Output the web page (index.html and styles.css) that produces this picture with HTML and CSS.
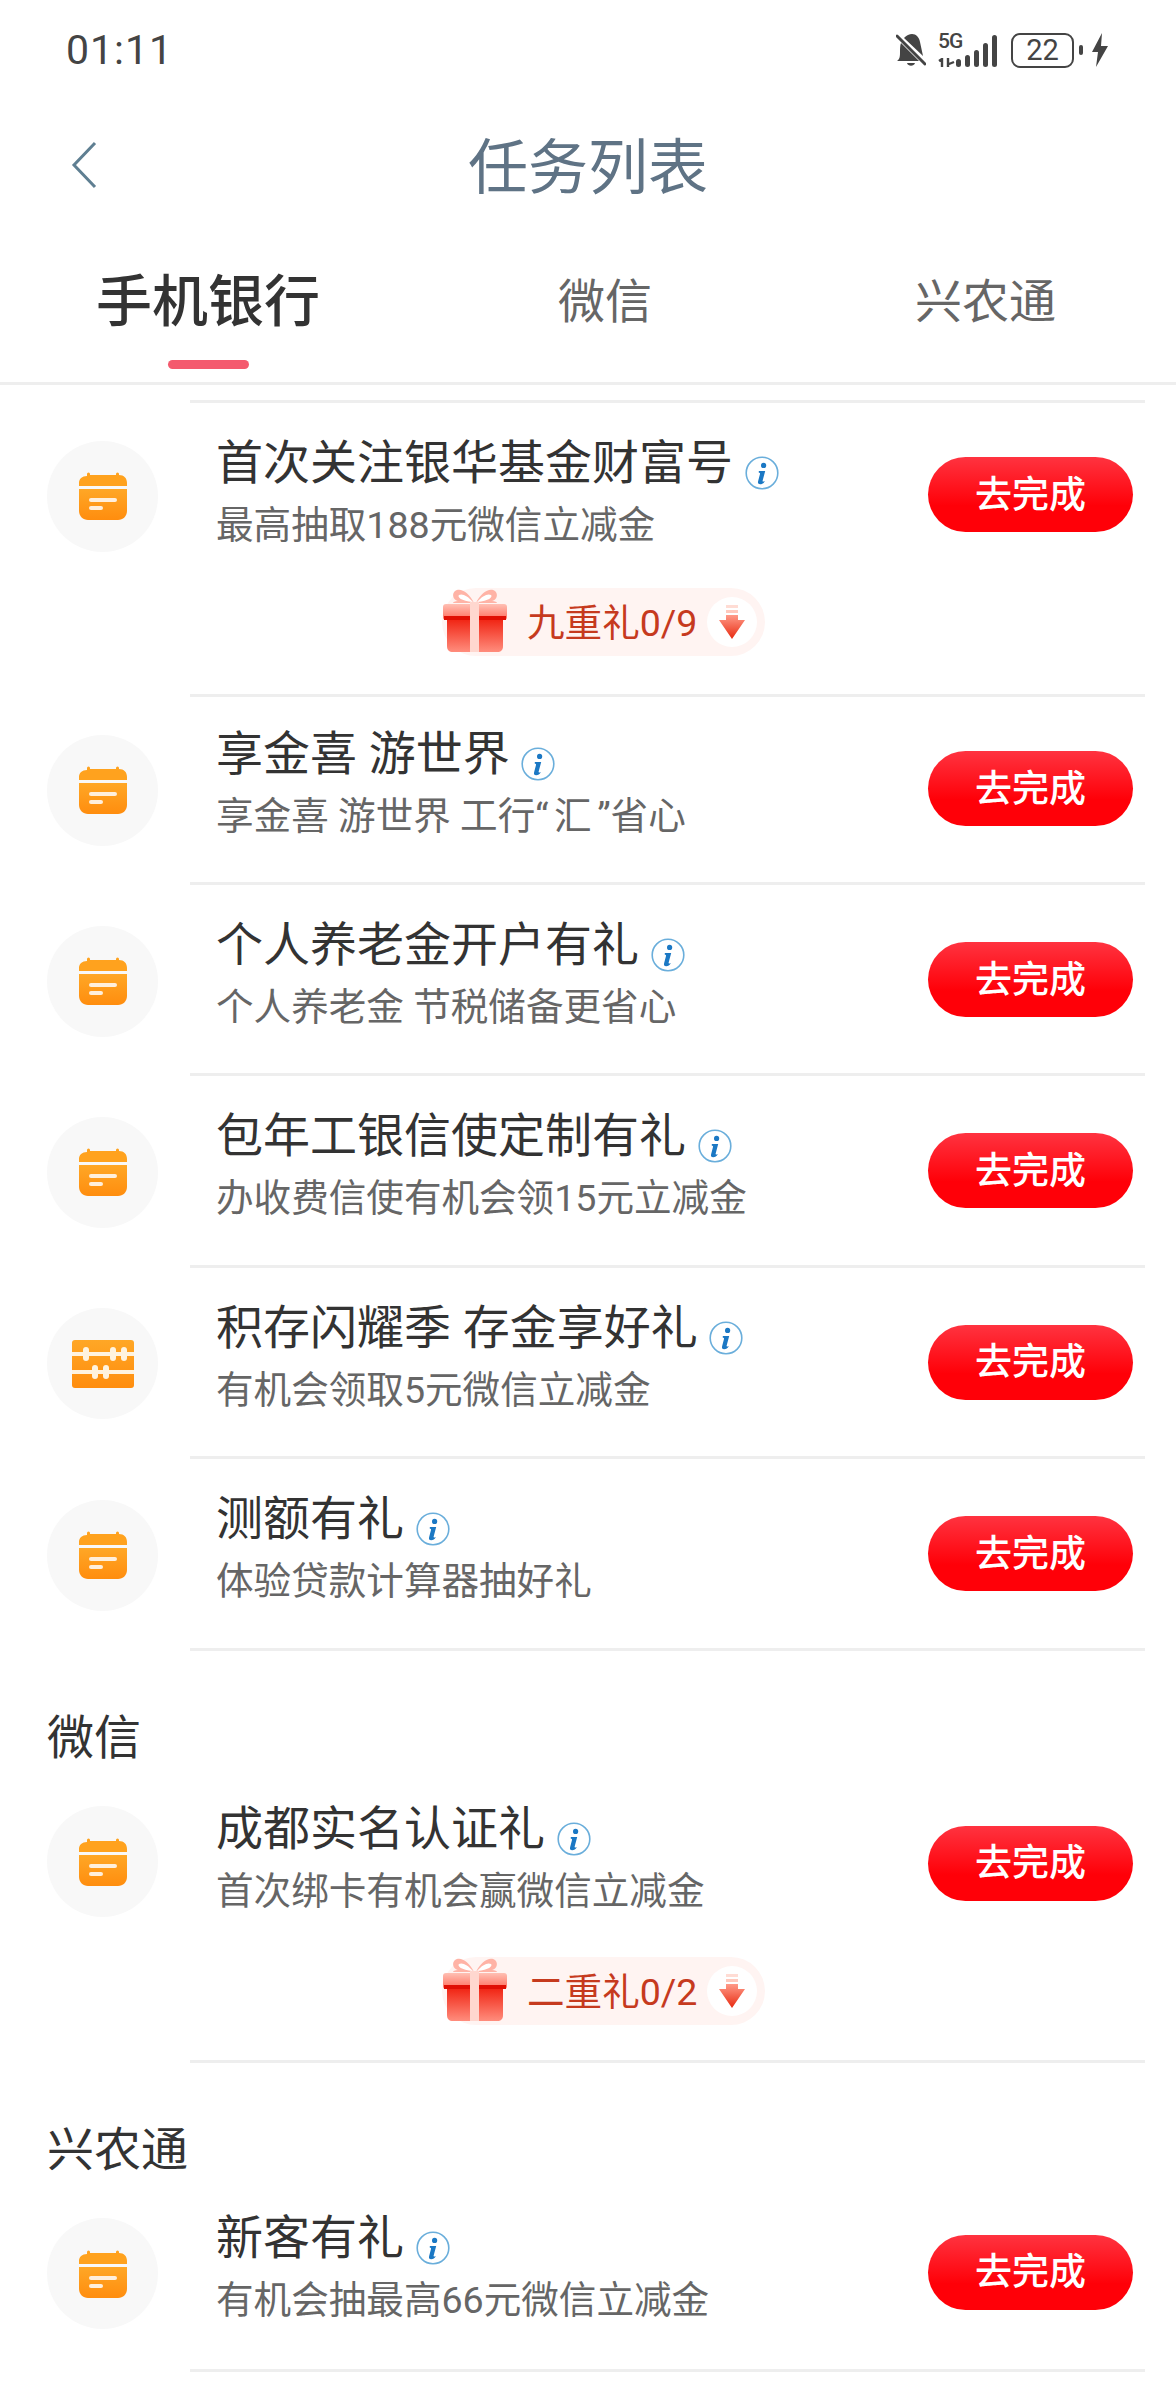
FILE: index.html
```html
<!DOCTYPE html>
<html lang="zh">
<head>
  <meta charset="utf-8">
  <title>任务列表</title>
  <link rel="stylesheet" href="styles.css">
</head>
<body>

<svg class="sprite" width="0" height="0">
  <defs>
    <linearGradient id="orange" x1="0" y1="0" x2="0" y2="1">
      <stop offset="0" stop-color="#ffa726"/>
      <stop offset="1" stop-color="#ff8d0e"/>
    </linearGradient>
    <linearGradient id="giftBody" x1="0" y1="0" x2="0" y2="1">
      <stop offset="0" stop-color="#f0200f"/>
      <stop offset="1" stop-color="#ff8d7d"/>
    </linearGradient>
    <linearGradient id="giftLid" x1="0" y1="0" x2="0" y2="1">
      <stop offset="0" stop-color="#ffc0b4"/>
      <stop offset="1" stop-color="#ff6d5c"/>
    </linearGradient>
    <linearGradient id="arrowFill" x1="0" y1="0" x2="0" y2="1">
      <stop offset="0" stop-color="#ff9a88"/>
      <stop offset="1" stop-color="#e82a10"/>
    </linearGradient>
    <symbol id="calendar" viewBox="0 0 50 50">
      <path d="M9 5V3a1.5 1.5 0 0 1 3 0V4h26V3a1.5 1.5 0 0 1 3 0V4c5 0 8 3 8 8v3H1v-3c0-4 3-7 8-7z" fill="#ffa21e"/>
      <path d="M1 18h48v22c0 5-4 9-9 9H10c-5 0-9-4-9-9z" fill="url(#orange)"/>
      <rect x="11" y="27" width="28" height="4" rx="2" fill="#ffefdc"/>
      <rect x="11" y="35" width="14" height="4" rx="2" fill="#ffefdc"/>
    </symbol>
    <symbol id="abacus" viewBox="0 0 62 50">
      <rect x="0" y="1" width="62" height="48" rx="3" fill="url(#orange)"/>
      <rect x="0" y="13" width="62" height="4" fill="#fff3df"/>
      <rect x="0" y="31" width="62" height="4" fill="#fff3df"/>
      <rect x="11" y="8" width="6" height="14" rx="3" fill="#fff3df"/>
      <rect x="38" y="8" width="6" height="14" rx="3" fill="#fff3df"/>
      <rect x="49" y="8" width="6" height="14" rx="3" fill="#fff3df"/>
      <rect x="20" y="26" width="6" height="14" rx="3" fill="#fff3df"/>
      <rect x="31" y="26" width="6" height="14" rx="3" fill="#fff3df"/>
    </symbol>
    <symbol id="info" viewBox="0 0 34 34">
      <circle cx="17" cy="17" r="15.8" fill="#fff" stroke="#6aaedb" stroke-width="1.6"/>
      <circle cx="18.6" cy="9.4" r="2.6" fill="#1b78c4"/>
      <path d="M13.800 15h6.400l-2.600 9.800c-.2.9.6 1.100 2.300.2-1.100 2.400-2.900 3.200-4.700 3.200-1.900 0-2.600-1.100-2.100-3l1.900-7.200c.2-.9-.2-1.300-1.200-1.300z" fill="#1b78c4"/>
    </symbol>
    <symbol id="gift" viewBox="0 0 64 66">
      <path d="M31 15C26 4 17-1 12 3c-4 4-1 9 3 10-3 0-5 1-5 2z" fill="#ffb3a6"/>
      <path d="M33 15C38 4 47-1 52 3c4 4 1 9-3 10 3 0 5 1 5 2z" fill="#ffb3a6"/>
      <path d="M30 14C25 8 19 5 16 7c-2 2 2 6 14 7zM34 14c5-6 11-9 14-7 2 2-2 6-14 7z" fill="#fff"/>
      <path d="M4 30h56v28c0 4-2 6-6 6H10c-4 0-6-2-6-6z" fill="url(#giftBody)"/>
      <rect x="0" y="16" width="64" height="16" rx="3" fill="url(#giftLid)"/>
      <rect x="1" y="28" width="62" height="4" fill="#e00f04"/>
      <rect x="27" y="14" width="9" height="50" fill="#ffd7cf"/>
    </symbol>
    <symbol id="arrow" viewBox="0 0 26 34">
      <rect x="7" y="0" width="12" height="3" fill="#ffdcd4"/>
      <rect x="7" y="5" width="12" height="3" fill="#ffc9bd"/>
      <path d="M7 10h12v5h7L13 34 0 15h7z" fill="url(#arrowFill)"/>
    </symbol>
  </defs>
</svg>

<div class="status-bar">
  <span class="clock">01:11</span>
  <div class="status-icons">
    <svg class="bell" width="30" height="34" viewBox="0 0 30 34">
      <path d="M12 2c6-3 11 1 12 7l3 14L8 5c1-1 2-2 4-3zM5 10l18 18H1c3-2 3-5 3-9 0-4 0-6 1-9z" fill="#444"/>
      <path d="M11 30h8c-1 3.500-7 3.500-8 0z" fill="#444"/>
      <path d="M1 3 29 31" stroke="#444" stroke-width="3" stroke-linecap="round"/>
    </svg>
    <div class="signal">
      <div class="net">
        <b>5G</b>
        <svg width="18" height="9" viewBox="0 0 18 9"><path d="M1 3l3-2v8M10 0v9M11 6l5-2" stroke="#444" stroke-width="2.400" fill="none"/></svg>
      </div>
      <div class="bars">
        <i class="bar b0"></i><i class="bar b1"></i><i class="bar b2"></i><i class="bar b3"></i><i class="bar b4"></i>
      </div>
    </div>
    <div class="battery"><span>22</span></div>
    <i class="battery-tip"></i>
    <svg width="16" height="34" viewBox="0 0 16 34"><path d="M10 0 0 19h6L4 34 16 13H9z" fill="#444"/></svg>
  </div>
</div>

<div class="nav-bar">
  <svg class="back" width="28" height="48" viewBox="0 0 28 48"><path d="M25 2 4 24l21 22" fill="none" stroke="#5f7f92" stroke-width="3"/></svg>
  <h1>任务列表</h1>
</div>

<div class="tabs">
  <div class="tab tab-active">手机银行</div>
  <div class="tab tab-wx">微信</div>
  <div class="tab tab-xnt">兴农通</div>
</div>

<div class="list">
  <div class="first-line"></div>

  <div class="task task-short task-reward task-first">
    <div class="circle"><svg width="50" height="50"><use href="#calendar"/></svg></div>
    <div class="task-main">
      <div class="task-top">
        <div class="task-text">
          <div class="task-title">首次关注银华基金财富号 <svg class="info"><use href="#info"/></svg></div>
          <div class="task-sub">最高抽取188元微信立减金</div>
        </div>
        <button class="go">去完成</button>
      </div>
      <div class="reward">
        <svg class="gift"><use href="#gift"/></svg>
        <span class="reward-label">九重礼0/9</span>
        <span class="reward-arrow"><svg width="26" height="34"><use href="#arrow"/></svg></span>
      </div>
    </div>
  </div>

  <div class="task task-short task-second">
    <div class="circle"><svg width="50" height="50"><use href="#calendar"/></svg></div>
    <div class="task-main">
      <div class="task-top">
        <div class="task-text">
          <div class="task-title">享金喜 游世界 <svg class="info"><use href="#info"/></svg></div>
          <div class="task-sub">享金喜 游世界 工行“<span class="quoted">汇</span>”省心</div>
        </div>
        <button class="go">去完成</button>
      </div>
    </div>
  </div>

  <div class="task">
    <div class="circle"><svg width="50" height="50"><use href="#calendar"/></svg></div>
    <div class="task-main">
      <div class="task-top">
        <div class="task-text">
          <div class="task-title">个人养老金开户有礼 <svg class="info"><use href="#info"/></svg></div>
          <div class="task-sub">个人养老金 节税储备更省心</div>
        </div>
        <button class="go">去完成</button>
      </div>
    </div>
  </div>

  <div class="task">
    <div class="circle"><svg width="50" height="50"><use href="#calendar"/></svg></div>
    <div class="task-main">
      <div class="task-top">
        <div class="task-text">
          <div class="task-title">包年工银信使定制有礼 <svg class="info"><use href="#info"/></svg></div>
          <div class="task-sub">办收费信使有机会领15元立减金</div>
        </div>
        <button class="go">去完成</button>
      </div>
    </div>
  </div>

  <div class="task">
    <div class="circle"><svg width="62" height="50"><use href="#abacus"/></svg></div>
    <div class="task-main">
      <div class="task-top">
        <div class="task-text">
          <div class="task-title">积存闪耀季 存金享好礼 <svg class="info"><use href="#info"/></svg></div>
          <div class="task-sub">有机会领取5元微信立减金</div>
        </div>
        <button class="go">去完成</button>
      </div>
    </div>
  </div>

  <div class="task">
    <div class="circle"><svg width="50" height="50"><use href="#calendar"/></svg></div>
    <div class="task-main">
      <div class="task-top">
        <div class="task-text">
          <div class="task-title">测额有礼 <svg class="info"><use href="#info"/></svg></div>
          <div class="task-sub">体验贷款计算器抽好礼</div>
        </div>
        <button class="go">去完成</button>
      </div>
    </div>
  </div>

  <h2 class="group">微信</h2>

  <div class="task task-reward task-wx">
    <div class="circle"><svg width="50" height="50"><use href="#calendar"/></svg></div>
    <div class="task-main">
      <div class="task-top">
        <div class="task-text">
          <div class="task-title">成都实名认证礼 <svg class="info"><use href="#info"/></svg></div>
          <div class="task-sub">首次绑卡有机会赢微信立减金</div>
        </div>
        <button class="go">去完成</button>
      </div>
      <div class="reward">
        <svg class="gift"><use href="#gift"/></svg>
        <span class="reward-label">二重礼0/2</span>
        <span class="reward-arrow"><svg width="26" height="34"><use href="#arrow"/></svg></span>
      </div>
    </div>
  </div>

  <h2 class="group">兴农通</h2>

  <div class="task task-short">
    <div class="circle"><svg width="50" height="50"><use href="#calendar"/></svg></div>
    <div class="task-main">
      <div class="task-top">
        <div class="task-text">
          <div class="task-title">新客有礼 <svg class="info"><use href="#info"/></svg></div>
          <div class="task-sub">有机会抽最高66元微信立减金</div>
        </div>
        <button class="go">去完成</button>
      </div>
    </div>
  </div>
</div>

</body>
</html>
```

FILE: styles.css
```css
html, body {
  margin: 0;
  padding: 0;
}

body {
  width: 1176px;
  height: 2400px;
  overflow: hidden;
  background: #fff;
  font-family: Roboto, "Noto Sans CJK SC", sans-serif;
  color: #333;
}

.sprite {
  position: absolute;
}

.status-bar {
  height: 100px;
  padding: 0 68px 0 66px;
  display: flex;
  align-items: center;
  justify-content: space-between;
}

.clock {
  font-size: 41px;
  letter-spacing: 1px;
  color: #444;
}

.status-icons {
  display: flex;
  align-items: center;
}

.signal {
  display: flex;
  align-items: flex-end;
  height: 34px;
  margin-left: 12px;
}

.net {
  width: 24px;
  height: 34px;
  display: flex;
  flex-direction: column;
  justify-content: space-between;
}

.net b {
  font-size: 21px;
  line-height: 16px;
  font-weight: 500;
  letter-spacing: -1px;
  color: #444;
}

.net svg {
  display: block;
}

.bars {
  display: flex;
  align-items: flex-end;
  gap: 4px;
  margin-left: -6px;
}

.bar {
  width: 5px;
  background: #444;
  border-radius: 3px;
}

.b0 { height: 8px; }
.b1 { height: 12px; }
.b2 { height: 17px; }
.b3 { height: 24px; }
.b4 { height: 32px; }

.battery {
  width: 63px;
  height: 35px;
  margin-left: 14px;
  border: 2.5px solid #444;
  border-radius: 9px;
  box-sizing: border-box;
  display: flex;
  align-items: center;
  justify-content: center;
}

.battery span {
  font-size: 29px;
  color: #444;
}

.battery-tip {
  width: 4px;
  height: 10px;
  margin: 0 9px 0 5px;
  background: #444;
  border-radius: 2px;
}

.nav-bar {
  height: 125px;
  display: grid;
  grid-template-columns: 1fr auto 1fr;
  align-items: center;
}

.nav-bar h1 {
  margin: 0;
  font-size: 60px;
  font-weight: 400;
  color: #5f7385;
}

.back {
  margin-left: 70px;
  margin-top: 4px;
}

.tabs {
  height: 160px;
  box-sizing: border-box;
  padding-top: 41px;
  border-bottom: 3px solid #eeeeee;
  display: flex;
  align-items: flex-start;
}

.tab {
  margin-top: 3px;
  font-size: 47px;
  line-height: 66px;
  color: #666;
}

.tab-active {
  margin: 0 0 0 96px;
  position: relative;
  font-size: 56px;
  line-height: 72px;
  font-weight: 500;
  color: #333;
}

.tab-active::after {
  content: "";
  position: absolute;
  left: 72px;
  top: 94px;
  width: 81px;
  height: 9px;
  border-radius: 5px;
  background: #f45a6e;
}

.tab-wx { margin-left: 238px; }
.tab-xnt { margin-left: 263px; }

.list {
  padding-top: 15px;
}

.first-line {
  height: 3px;
  margin: 0 31px 0 190px;
  background: #eeeeee;
}

.task {
  display: flex;
  padding-left: 47px;
}

.circle {
  width: 111px;
  height: 111px;
  margin-top: 40.5px;
  margin-right: 32px;
  border-radius: 50%;
  background: #f8f8f8;
  display: flex;
  align-items: center;
  justify-content: center;
  flex: none;
}

.task-main {
  flex: 1;
  margin-right: 31px;
  border-bottom: 3px solid #eeeeee;
  height: 188.4px;
}

.task-reward .task-main {
  height: 291px;
}

.task-second .task-main {
  height: 185px;
}

.task-short .circle,
.task-wx .circle {
  margin-top: 37.5px;
}

.task-top {
  display: flex;
  justify-content: space-between;
  padding: 27px 12px 0 26px;
}

.task-short .task-top {
  padding-top: 24px;
}

.task-first .task-top {
  padding-top: 27px;
}

.task-title {
  font-size: 47px;
  line-height: 66px;
  color: #333;
}

.task-sub {
  margin-top: 2px;
  font-size: 37.6px;
  line-height: 54px;
  color: #666;
}

.quoted {
  margin: 0 5.5px;
}

.info {
  width: 34px;
  height: 34px;
  vertical-align: -11px;
}

.go {
  width: 205px;
  height: 75px;
  margin-top: 30px;
  border: none;
  border-radius: 38px;
  background: linear-gradient(#ff3340, #ff0008 65%);
  color: #fff;
  font-family: inherit;
  font-size: 37px;
  font-weight: 500;
  padding: 0 0 6px;
}

.task-first .go {
  margin-top: 27px;
}

.reward {
  width: 323px;
  height: 68px;
  margin: 39px 0 0 252px;
  display: flex;
  align-items: center;
  background: #fff4f2;
  border-radius: 34px;
}

.task-first .reward {
  margin-top: 36px;
}

.gift {
  width: 64px;
  height: 66px;
  margin-left: 1px;
  margin-top: -2px;
  flex: none;
}

.reward-label {
  margin-left: 20px;
  margin-top: -5px;
  font-size: 37.6px;
  color: #c63a1e;
}

.reward-arrow {
  width: 50px;
  height: 50px;
  margin-left: 10px;
  border-radius: 50%;
  background: #fff;
  display: flex;
  align-items: center;
  justify-content: center;
}

.group {
  margin: 0;
  padding: 55px 0 0 47px;
  height: 63px;
  font-size: 47px;
  line-height: 64px;
  font-weight: 400;
  color: #333;
}
```
